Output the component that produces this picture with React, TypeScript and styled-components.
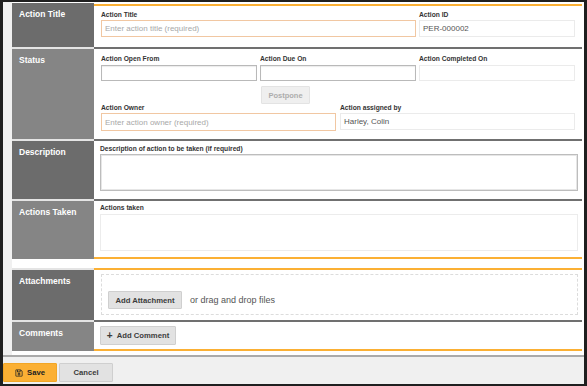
import React from 'react';
import styled, { createGlobalStyle } from 'styled-components';
import { FaRegSave } from 'react-icons/fa';

const Global = createGlobalStyle`
  html, body { margin: 0; padding: 0; width: 587px; height: 386px; overflow: hidden; background: #1f1f1f; }
  *, *::before, *::after { box-sizing: border-box; }
  body { font-family: "Liberation Sans", Arial, sans-serif; }
`;

const Frame = styled.div`
  width: 587px;
  height: 386px;
  border-style: solid;
  border-color: #1f1f1f;
  border-width: 2px 3px 2px 3px;
  display: flex;
  flex-direction: column;
  background: #fff;
`;

const Main = styled.main`
  flex: 1;
  background: #fff;
  border-left: 9px solid #f0f0f0;
  padding: 2px 2px 4px 0;
  display: flex;
  flex-direction: column;
`;

const Group = styled.section`
  display: flex;
  flex-direction: column;
`;

const Gap = styled.div`
  height: 9px;
  flex: none;
`;

const Row = styled.div<{ $h: number }>`
  display: flex;
  height: ${p => p.$h}px;
  flex: none;
`;

const SideLabel = styled.div<{ $dark: boolean; $first?: boolean }>`
  width: 82px;
  flex: none;
  background: ${p => (p.$dark ? '#6c6c6c' : '#858585')};
  border-top: ${p => (p.$first ? '0' : '2px solid #e4e4e4')};
  margin-top: ${p => (p.$first ? '-1px' : '0')};
  color: #fff;
  font-weight: bold;
  font-size: 8.5px;
  line-height: 10px;
  padding: 6px 7px;
`;

const Content = styled.div<{ $top: 'orange' | 'gray'; $bottom?: boolean; $pt: number }>`
  flex: 1;
  min-width: 0;
  border-top: 2px solid ${p => (p.$top === 'orange' ? '#fbb034' : '#707070')};
  border-bottom: ${p => (p.$bottom ? '2px solid #fbb034' : '0')};
  padding: ${p => p.$pt}px 4px 0 6px;
  display: flex;
  flex-direction: column;
`;

const Grid3 = styled.div`
  display: grid;
  grid-template-columns: repeat(3, 1fr);
  column-gap: 3px;
  padding: 0 3px 0 1px;
`;

const Grid2 = styled.div`
  display: grid;
  grid-template-columns: 1fr 1fr;
  column-gap: 4px;
  padding: 0 3px 0 1px;
`;

const Field = styled.div<{ $span?: number; $gap?: number }>`
  display: flex;
  flex-direction: column;
  gap: ${p => p.$gap ?? 1}px;
  grid-column: span ${p => p.$span ?? 1};
  min-width: 0;
`;

const FieldLabel = styled.label`
  font-size: 6.7px;
  line-height: 8px;
  font-weight: bold;
  color: #333;
  white-space: nowrap;
`;

type Tone = 'required' | 'normal' | 'readonly';

const borderFor = (t: Tone) =>
  t === 'required' ? '#f1c7a2' : t === 'normal' ? '#b9b9b9' : '#ebebeb';

const TextInput = styled.input<{ $tone: Tone; $h: number }>`
  height: ${p => p.$h}px;
  width: 100%;
  border: 1px solid ${p => borderFor(p.$tone)};
  box-shadow: ${p => (p.$tone === 'normal' ? 'inset 0 1px 1px rgba(0,0,0,0.08)' : 'none')};
  background: #fff;
  font-family: "Liberation Sans", Arial, sans-serif;
  font-size: 8px;
  color: #555;
  padding: 0 3px;
  outline: none;
  &::placeholder { color: #a8a8a8; }
`;

const TextArea = styled.textarea<{ $tone: 'strong' | 'light' }>`
  height: 37px;
  width: 100%;
  resize: none;
  border: 1px solid ${p => (p.$tone === 'strong' ? '#bdbdbd' : '#ececec')};
  box-shadow: ${p => (p.$tone === 'strong' ? 'inset 0 0 0 1px #e6e6e6' : 'none')};
  background: #fff;
  outline: none;
  display: block;
`;

const GhostButton = styled.button`
  grid-column: 2;
  justify-self: start;
  margin-top: 5px;
  margin-left: 1px;
  width: 49px;
  height: 18px;
  background: #efefef;
  border: 1px solid #e3e3e3;
  border-radius: 1px;
  color: #adadad;
  font-family: "Liberation Sans", Arial, sans-serif;
  font-weight: bold;
  font-size: 7.5px;
  padding: 0;
`;

const Button = styled.button<{ $w: number; $h: number; $primary?: boolean }>`
  width: ${p => p.$w}px;
  height: ${p => p.$h}px;
  flex: none;
  display: inline-flex;
  align-items: center;
  justify-content: center;
  gap: 4px;
  background: ${p => (p.$primary ? '#fbb034' : '#e2e2e2')};
  border: 1px solid ${p => (p.$primary ? '#f2a626' : '#cfcfcf')};
  border-radius: 1px;
  color: ${p => (p.$primary ? '#222' : '#3c3c3c')};
  font-family: "Liberation Sans", Arial, sans-serif;
  font-weight: bold;
  font-size: 7.7px;
  padding: 0;
`;

const DropZone = styled.div`
  height: 41px;
  margin-left: 1px;
  border: 1px dashed #dcdcdc;
  padding: 16px 6px 0 6px;
  display: flex;
  align-items: flex-start;
  gap: 8px;
`;

const DropText = styled.span`
  font-size: 9px;
  line-height: 18px;
  color: #555;
`;

const Plus = styled.span`
  font-size: 10px;
  line-height: 8px;
  font-weight: bold;
`;

const Footer = styled.footer`
  flex: none;
  height: 29px;
  border-top: 2px solid #aaaaaa;
  background: #f0f0f0;
  padding: 6px 0 2px 0;
  display: flex;
  gap: 2px;
`;

export default function App() {
  return (
    <>
      <Global />
      <Frame>
        <Main>
          <Group>
            <Row $h={43}>
              <SideLabel $dark $first>Action Title</SideLabel>
              <Content $top="orange" $pt={5}>
                <Grid3>
                  <Field $span={2}>
                    <FieldLabel>Action Title</FieldLabel>
                    <TextInput $tone="required" $h={17} placeholder="Enter action title (required)" />
                  </Field>
                  <Field>
                    <FieldLabel>Action ID</FieldLabel>
                    <TextInput $tone="readonly" $h={17} value="PER-000002" readOnly />
                  </Field>
                </Grid3>
              </Content>
            </Row>
            <Row $h={92}>
              <SideLabel $dark={false}>Status</SideLabel>
              <Content $top="gray" $pt={6}>
                <Grid3>
                  <Field $gap={2}>
                    <FieldLabel>Action Open From</FieldLabel>
                    <TextInput $tone="normal" $h={16} />
                  </Field>
                  <Field $gap={2}>
                    <FieldLabel>Action Due On</FieldLabel>
                    <TextInput $tone="normal" $h={16} />
                  </Field>
                  <Field $gap={2}>
                    <FieldLabel>Action Completed On</FieldLabel>
                    <TextInput $tone="readonly" $h={16} readOnly />
                  </Field>
                  <GhostButton>Postpone</GhostButton>
                </Grid3>
                <Grid2>
                  <Field>
                    <FieldLabel>Action Owner</FieldLabel>
                    <TextInput $tone="required" $h={18} placeholder="Enter action owner (required)" />
                  </Field>
                  <Field>
                    <FieldLabel>Action assigned by</FieldLabel>
                    <TextInput $tone="readonly" $h={17} value="Harley, Colin" readOnly />
                  </Field>
                </Grid2>
              </Content>
            </Row>
            <Row $h={60}>
              <SideLabel $dark>Description</SideLabel>
              <Content $top="gray" $pt={4}>
                <Field>
                  <FieldLabel>Description of action to be taken (if required)</FieldLabel>
                  <TextArea $tone="strong" />
                </Field>
              </Content>
            </Row>
            <Row $h={60}>
              <SideLabel $dark={false}>Actions Taken</SideLabel>
              <Content $top="gray" $bottom $pt={3}>
                <Field $gap={2}>
                  <FieldLabel>Actions taken</FieldLabel>
                  <TextArea $tone="light" />
                </Field>
              </Content>
            </Row>
          </Group>
          <Gap />
          <Group>
            <Row $h={52}>
              <SideLabel $dark>Attachments</SideLabel>
              <Content $top="orange" $pt={4}>
                <DropZone>
                  <Button $w={74} $h={18}>Add Attachment</Button>
                  <DropText>or drag and drop files</DropText>
                </DropZone>
              </Content>
            </Row>
            <Row $h={31}>
              <SideLabel $dark={false}>Comments</SideLabel>
              <Content $top="gray" $bottom $pt={4}>
                <Button $w={76} $h={19}>
                  <Plus>+</Plus>
                  Add Comment
                </Button>
              </Content>
            </Row>
          </Group>
        </Main>
        <Footer>
          <Button $w={54} $h={19} $primary>
            <FaRegSave size={8} />
            Save
          </Button>
          <Button $w={54} $h={19}>Cancel</Button>
        </Footer>
      </Frame>
    </>
  );
}
